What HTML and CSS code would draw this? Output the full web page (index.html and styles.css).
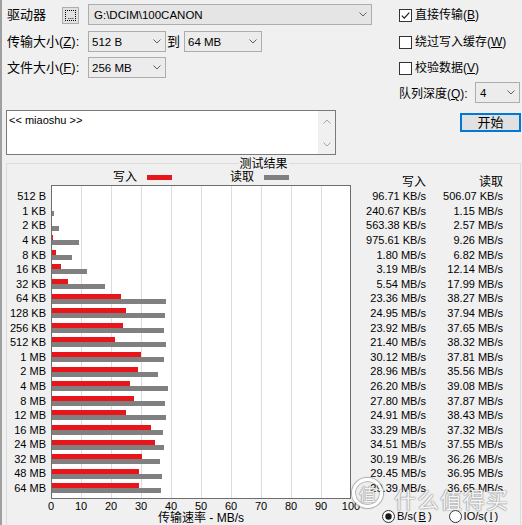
FILE: index.html
```html
<!DOCTYPE html>
<html>
<head>
<meta charset="utf-8">
<link rel="stylesheet" href="styles.css">
</head>
<body>
<div class="window">
  <div class="top">
    <div class="left">
      <div class="row">
        <span class="lbl w55">驱动器</span>
        <span class="btn-dots"><span class="focus">...</span></span>
        <span class="combo drive"><span class="val">G:\DCIM\100CANON</span><svg class="chev" viewBox="0 0 8 5" width="8" height="5"><polyline points="0.5,0.5 4,4 7.5,0.5" fill="none" stroke="#606060" stroke-width="1"/></svg></span>
      </div>
      <div class="row r2">
        <span class="lbl w81">传输大小(<u>Z</u>):</span>
        <span class="combo small"><span class="val">512 B</span><svg class="chev" viewBox="0 0 8 5" width="8" height="5"><polyline points="0.5,0.5 4,4 7.5,0.5" fill="none" stroke="#606060" stroke-width="1"/></svg></span>
        <span class="to">到</span>
        <span class="combo small"><span class="val">64 MB</span><svg class="chev" viewBox="0 0 8 5" width="8" height="5"><polyline points="0.5,0.5 4,4 7.5,0.5" fill="none" stroke="#606060" stroke-width="1"/></svg></span>
      </div>
      <div class="row r3">
        <span class="lbl w81">文件大小(<u>F</u>):</span>
        <span class="combo small"><span class="val">256 MB</span><svg class="chev" viewBox="0 0 8 5" width="8" height="5"><polyline points="0.5,0.5 4,4 7.5,0.5" fill="none" stroke="#606060" stroke-width="1"/></svg></span>
      </div>
    </div>
    <div class="right">
      <div class="check"><span class="box"><svg viewBox="0 0 11 11" width="11" height="11"><polyline points="1.8,5.6 4.3,8.1 9.3,2.6" fill="none" stroke="#1a1a1a" stroke-width="1.2"/></svg></span><span>直接传输(<u>B</u>)</span></div>
      <div class="check c2"><span class="box"></span><span>绕过写入缓存(<u>W</u>)</span></div>
      <div class="check c3"><span class="box"></span><span>校验数据(<u>V</u>)</span></div>
      <div class="queue">
        <span class="qlbl">队列深度(<u>Q</u>):</span>
        <span class="combo q"><span class="val">4</span><svg class="chev" viewBox="0 0 8 5" width="8" height="5"><polyline points="0.5,0.5 4,4 7.5,0.5" fill="none" stroke="#606060" stroke-width="1"/></svg></span>
      </div>
    </div>
  </div>

  <div class="mid">
    <div class="desc">
      <div class="desc-text">&lt;&lt; miaoshu &gt;&gt;</div>
      <div class="vscroll">
        <svg viewBox="0 0 8 5" width="8" height="5"><polyline points="0.5,4.5 4,1 7.5,4.5" fill="none" stroke="#a6a6a6" stroke-width="1"/></svg>
        <svg viewBox="0 0 8 5" width="8" height="5"><polyline points="0.5,0.5 4,4 7.5,0.5" fill="none" stroke="#a6a6a6" stroke-width="1"/></svg>
      </div>
    </div>
    <button class="start">开始</button>
  </div>

  <div class="group">
    <div class="group-title">测试结果</div>
    <div class="chart">
      <div class="legend">
        <span class="legend-item">写入<span class="swatch sw-w"></span></span>
        <span class="legend-item">读取<span class="swatch sw-r"></span></span>
      </div>
      <div class="hdr hdr-w">写入</div>
      <div class="hdr hdr-r">读取</div>

      <div class="sizes">
        <div>512 B</div><div>1 KB</div><div>2 KB</div><div>4 KB</div><div>8 KB</div><div>16 KB</div><div>32 KB</div><div>64 KB</div><div>128 KB</div><div>256 KB</div><div>512 KB</div><div>1 MB</div><div>2 MB</div><div>4 MB</div><div>8 MB</div><div>12 MB</div><div>16 MB</div><div>24 MB</div><div>32 MB</div><div>48 MB</div><div>64 MB</div>
      </div>

      <div class="plot">
        <div class="bar-row"><div class="bw" style="width:0px"></div><div class="br" style="width:0px"></div></div>
        <div class="bar-row"><div class="bw" style="width:0px"></div><div class="br" style="width:2.45px"></div></div>
        <div class="bar-row"><div class="bw" style="width:0px"></div><div class="br" style="width:6.7px"></div></div>
        <div class="bar-row"><div class="bw" style="width:1px"></div><div class="br" style="width:26.8px"></div></div>
        <div class="bar-row"><div class="bw" style="width:4.4px"></div><div class="br" style="width:19.5px"></div></div>
        <div class="bar-row"><div class="bw" style="width:8.6px"></div><div class="br" style="width:35.4px"></div></div>
        <div class="bar-row"><div class="bw" style="width:15.6px"></div><div class="br" style="width:53px"></div></div>
        <div class="bar-row"><div class="bw" style="width:69.1px"></div><div class="br" style="width:113.8px"></div></div>
        <div class="bar-row"><div class="bw" style="width:73.9px"></div><div class="br" style="width:112.8px"></div></div>
        <div class="bar-row"><div class="bw" style="width:70.8px"></div><div class="br" style="width:112px"></div></div>
        <div class="bar-row"><div class="bw" style="width:63.2px"></div><div class="br" style="width:114px"></div></div>
        <div class="bar-row"><div class="bw" style="width:89.4px"></div><div class="br" style="width:112.4px"></div></div>
        <div class="bar-row"><div class="bw" style="width:85.9px"></div><div class="br" style="width:105.7px"></div></div>
        <div class="bar-row"><div class="bw" style="width:77.6px"></div><div class="br" style="width:116.2px"></div></div>
        <div class="bar-row"><div class="bw" style="width:82.4px"></div><div class="br" style="width:112.6px"></div></div>
        <div class="bar-row"><div class="bw" style="width:73.7px"></div><div class="br" style="width:114.3px"></div></div>
        <div class="bar-row"><div class="bw" style="width:98.9px"></div><div class="br" style="width:111px"></div></div>
        <div class="bar-row"><div class="bw" style="width:102.5px"></div><div class="br" style="width:111.7px"></div></div>
        <div class="bar-row"><div class="bw" style="width:89.6px"></div><div class="br" style="width:107.8px"></div></div>
        <div class="bar-row"><div class="bw" style="width:87.4px"></div><div class="br" style="width:109.9px"></div></div>
        <div class="bar-row"><div class="bw" style="width:87.2px"></div><div class="br" style="width:109px"></div></div>
      </div>

      <div class="vals vals-w">
        <div>96.71 KB/s</div><div>240.67 KB/s</div><div>563.38 KB/s</div><div>975.61 KB/s</div><div>1.80 MB/s</div><div>3.19 MB/s</div><div>5.54 MB/s</div><div>23.36 MB/s</div><div>24.95 MB/s</div><div>23.92 MB/s</div><div>21.40 MB/s</div><div>30.12 MB/s</div><div>28.96 MB/s</div><div>26.20 MB/s</div><div>27.80 MB/s</div><div>24.91 MB/s</div><div>33.29 MB/s</div><div>34.51 MB/s</div><div>30.19 MB/s</div><div>29.45 MB/s</div><div>29.39 MB/s</div>
      </div>
      <div class="vals vals-r">
        <div>506.07 KB/s</div><div>1.15 MB/s</div><div>2.57 MB/s</div><div>9.26 MB/s</div><div>6.82 MB/s</div><div>12.14 MB/s</div><div>17.99 MB/s</div><div>38.27 MB/s</div><div>37.94 MB/s</div><div>37.65 MB/s</div><div>38.32 MB/s</div><div>37.81 MB/s</div><div>35.56 MB/s</div><div>39.08 MB/s</div><div>37.87 MB/s</div><div>38.43 MB/s</div><div>37.32 MB/s</div><div>37.55 MB/s</div><div>36.26 MB/s</div><div>36.95 MB/s</div><div>36.65 MB/s</div>
      </div>

      <div class="axis">
        <div class="ticks"><span>0</span><span>10</span><span>20</span><span>30</span><span>40</span><span>50</span><span>60</span><span>70</span><span>80</span><span>90</span><span>100</span></div>
        <div class="axis-title">传输速率 - MB/s</div>
      </div>

      <div class="radios">
        <span class="radio"><svg viewBox="0 0 13 13" width="13" height="13"><circle cx="6.5" cy="6.5" r="6" fill="#fff" stroke="#333" stroke-width="1"/><circle cx="6.5" cy="6.5" r="3.2" fill="#1a1a1a"/></svg>B/s(<u>B</u>)</span>
        <span class="radio"><svg viewBox="0 0 13 13" width="13" height="13"><circle cx="6.5" cy="6.5" r="6" fill="#fff" stroke="#333" stroke-width="1"/></svg>IO/s(<u>I</u>)</span>
      </div>
    </div>
  </div>

  <div class="watermark">
    <span class="wm-ring">值</span>
    <span class="wm-text">什么值得买</span>
  </div>
</div>
</body>
</html>
```

FILE: styles.css
```css
* { box-sizing: border-box; }
html, body { margin: 0; padding: 0; }
body {
  background: #f0f0f0;
  font-family: "Liberation Sans", "Noto Sans CJK SC", sans-serif;
  font-size: 11px;
  color: #000;
}
u { text-decoration: underline; text-underline-offset: 1px; }

.window {
  position: relative;
  width: 522px;
  height: 525px;
  overflow: hidden;
  border-left: 2px solid #a0a0a0;
  background: #f0f0f0;
}

/* ---------- top area ---------- */
.top { display: flex; height: 103px; }
.left { width: 397px; padding: 4px 0 0 5px; }
.row { display: flex; align-items: center; height: 21px; }
.r2 { margin-top: 6px; }
.r3 { margin-top: 5px; }
.lbl { font-size: 13px; line-height: 21px; white-space: nowrap; }
.w55 { width: 55px; }
.w81 { width: 81px; }

.btn-dots {
  width: 17px;
  height: 17px;
  margin-top: 1px;
  margin-right: 9px;
  border: 1px solid #adadad;
  background: #e1e1e1;
  padding: 2px;
}
.focus {
  display: flex;
  align-items: flex-end;
  justify-content: center;
  width: 100%;
  height: 100%;
  border: 1px dotted #000;
  font-size: 9px;
  line-height: 7px;
  letter-spacing: -0.5px;
}

.combo {
  display: flex;
  align-items: center;
  height: 21px;
  border: 1px solid #adadad;
  background: #ececec;
  padding: 1px 4px 0 3px;
  font-size: 11.5px;
  white-space: nowrap;
}
.combo .val { flex: 1; }
.chev { display: block; flex: none; margin-top: -1px; }
.drive { width: 284px; padding-left: 5px; background: #e5e5e5; }
.small { width: 78px; }
.to { width: 18px; font-size: 13px; padding-left: 1px; line-height: 21px; }

.right { flex: 1; padding-top: 9px; font-size: 12px; }
.check { display: flex; align-items: center; height: 13px; line-height: 13px; white-space: nowrap; }
.c2 { margin-top: 14px; }
.c3 { margin-top: 13px; }
.box {
  display: flex;
  flex: none;
  width: 13px;
  height: 13px;
  border: 1px solid #333;
  background: #fff;
  margin-right: 3px;
}
.box svg { display: block; }
.queue { display: flex; align-items: center; height: 21px; margin-top: 7px; }
.qlbl { width: 76px; white-space: nowrap; }
.combo.q { width: 45px; padding-left: 4px; }

/* ---------- description + start ---------- */
.mid { display: flex; align-items: flex-start; margin-top: 7px; padding-left: 4px; }
.desc {
  display: flex;
  width: 330px;
  height: 45px;
  border: 1px solid #7a7a7a;
  background: #fff;
}
.desc-text { flex: 1; padding: 3px 2px; font-size: 11px; line-height: 13px; }
.vscroll {
  width: 17px;
  background: #f0f0f0;
  display: flex;
  flex-direction: column;
  justify-content: space-between;
  align-items: center;
  padding: 8px 0 7px;
}
.vscroll svg { display: block; }
.start {
  margin: 3px 1px 0 auto;
  width: 61px;
  height: 19px;
  border: 2px solid #0078d7;
  background: #e1e1e1;
  font-family: "Liberation Sans", "Noto Sans CJK SC", sans-serif;
  font-size: 13px;
  line-height: 15px;
  padding: 0;
  color: #000;
}

/* ---------- results group ---------- */
.group {
  position: relative;
  margin: 8px 0 0 4px;
  width: 515px;
  height: 400px;
  border: 1px solid #dcdcdc;
}
.group-title {
  position: absolute;
  top: -6px;
  left: 50%;
  transform: translateX(-50%);
  background: #f0f0f0;
  padding: 0 1px;
  font-size: 12px;
  line-height: 12px;
  white-space: nowrap;
}

.chart {
  display: grid;
  grid-template-columns: 44px 300px 75px 77px;
  grid-template-rows: 21px 314px 30px;
}

.legend {
  grid-column: 2;
  grid-row: 1;
  display: flex;
  justify-content: center;
  align-items: center;
  gap: 58px;
  margin-top: 7px;
  height: 12px;
  font-size: 12px;
  line-height: 12px;
}
.legend-item { display: flex; align-items: center; gap: 10px; }
.swatch { display: block; width: 25px; height: 5px; }
.sw-w { background: #e8161b; }
.sw-r { background: #808080; }

.hdr {
  grid-row: 1;
  text-align: right;
  font-size: 12px;
  line-height: 12px;
  padding-top: 12px;
}
.hdr-w { grid-column: 3; }
.hdr-r { grid-column: 4; }

.sizes {
  grid-column: 1;
  grid-row: 2;
  padding: 4.2px 5px 0 0;
  text-align: right;
  white-space: nowrap;
}
.sizes div, .vals div { height: 14.6px; line-height: 14.6px; }

.plot {
  grid-column: 2;
  grid-row: 2;
  border: 1px solid #6e6e6e;
  background-color: #fff;
  background-image: repeating-linear-gradient(to right, transparent 0 29px, #dcdcdc 29px 30px);
  padding-top: 3.2px;
}
.bar-row { height: 14.6px; padding-top: 2.3px; }
.bw { height: 5px; background: #e8161b; }
.br { height: 5px; background: #808080; }

.vals { grid-row: 2; padding-top: 4.2px; text-align: right; white-space: nowrap; }
.vals-w { grid-column: 3; }
.vals-r { grid-column: 4; }

.axis { grid-column: 2; grid-row: 3; }
.ticks { display: flex; margin-left: -15px; height: 14px; line-height: 14px; }
.ticks span { flex: none; width: 30px; text-align: center; }
.axis-title { margin-top: -1px; text-align: center; font-size: 12px; line-height: 12px; white-space: nowrap; }

.radios {
  grid-column: 3 / 5;
  grid-row: 3;
  display: flex;
  align-items: center;
  padding: 11px 0 0 31px;
  height: 24px;
}
.radio { display: flex; align-items: center; gap: 2px; line-height: 13px; }
.radio svg { display: block; }
.radio + .radio { margin-left: 17px; }

/* ---------- watermark overlay ---------- */
.watermark {
  position: absolute;
  left: 350px;
  top: 477px;
  display: flex;
  align-items: center;
  color: rgba(255, 255, 255, 0.92);
  text-shadow: 0 0 1px #8a8a8a, 0 0 1px #8a8a8a, 0 0 2px rgba(0, 0, 0, 0.25);
  font-family: "Noto Sans CJK SC", sans-serif;
  pointer-events: none;
}
.wm-ring {
  display: flex;
  align-items: center;
  justify-content: center;
  width: 31px;
  height: 30px;
  border: 3px solid rgba(255, 255, 255, 0.92);
  border-radius: 50%;
  box-shadow: 0 0 1px 1px rgba(120, 120, 120, 0.6), inset 0 0 1px 1px rgba(120, 120, 120, 0.5);
  font-size: 17px;
  line-height: 17px;
}
.wm-text { margin-left: 11px; margin-top: 10px; font-size: 22px; line-height: 22px; letter-spacing: 1px; }
```
